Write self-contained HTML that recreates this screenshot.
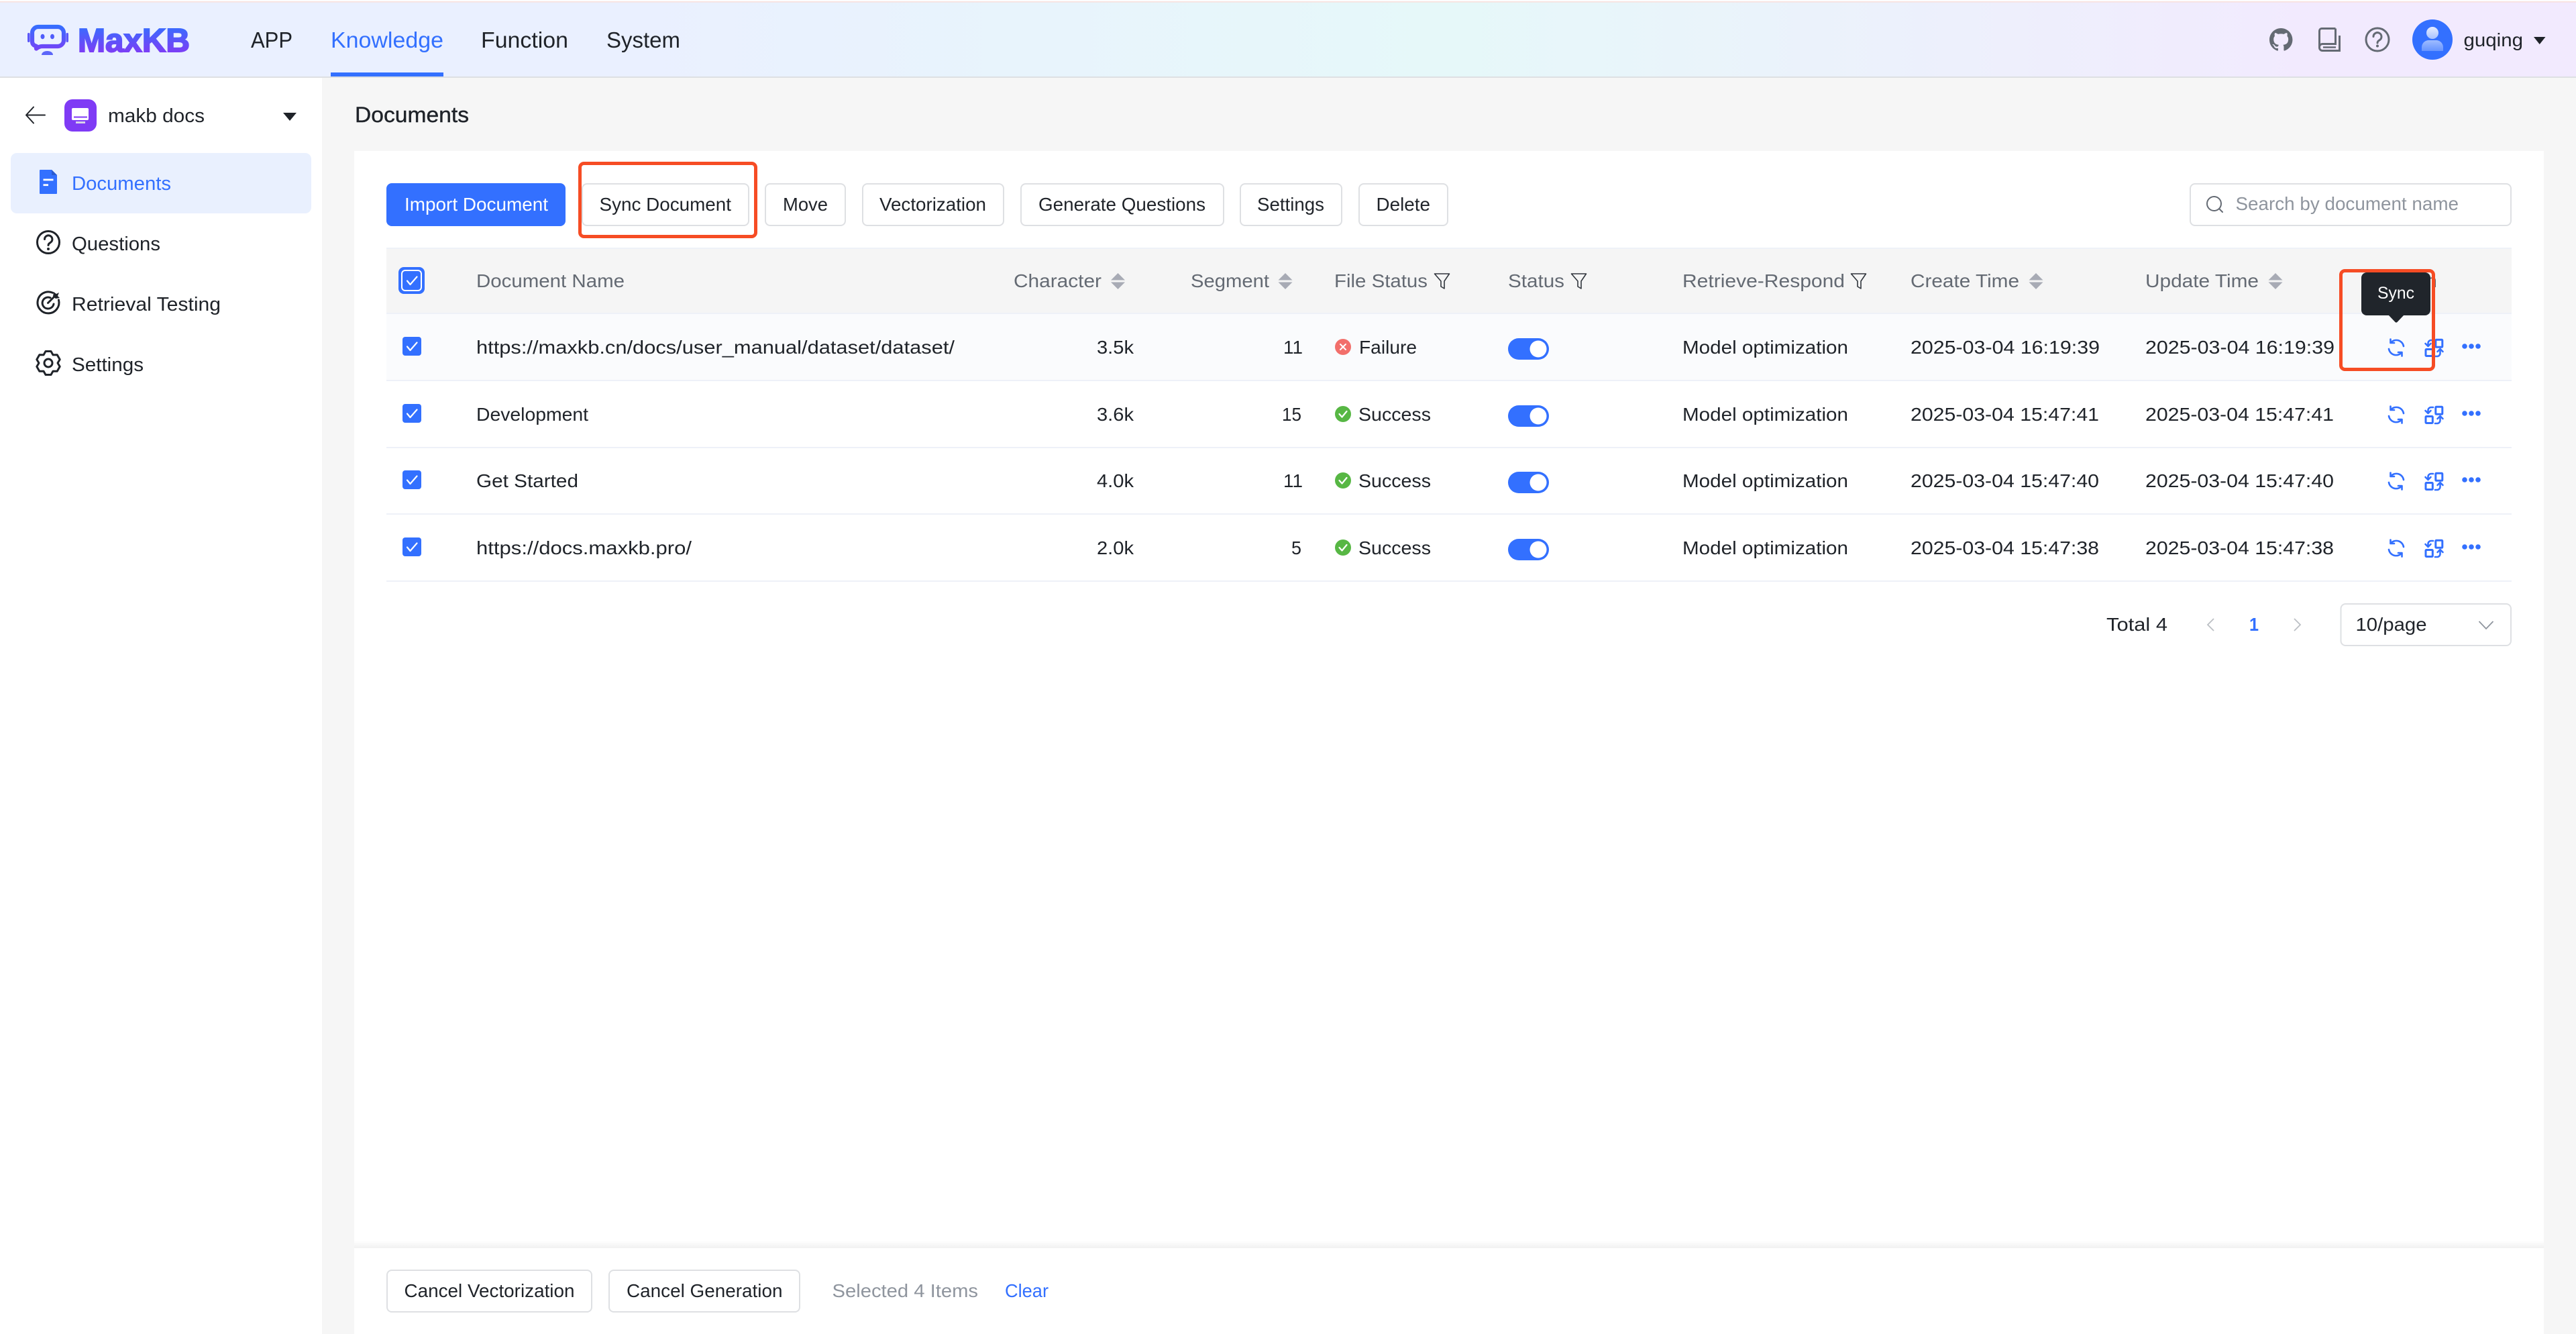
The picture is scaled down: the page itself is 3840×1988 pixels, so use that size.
<!DOCTYPE html>
<html lang="en">
<head>
<meta charset="utf-8">
<title>MaxKB - Documents</title>
<style>
html,body{margin:0;padding:0;background:#F6F6F6;width:3840px;height:1988px;overflow:hidden}
svg{display:block}
text{font-family:"Liberation Sans",sans-serif;fill:#1F2329;font-size:27.5px}
.s{fill:#646A73}
.b{fill:#3370FF}
.p{fill:#8F959E}
.w{fill:#fff}
.side{font-size:28.5px}
.nav{font-size:33px}
.btn{fill:#fff;stroke:#DEE0E3;stroke-width:2}
.line{fill:#EEF1F8}
.ic{fill:none;stroke:#3370FF;stroke-width:2.6;stroke-linecap:round;stroke-linejoin:round}
.red{fill:none;stroke:#F64C24;stroke-width:5}
.sort{fill:#A8ABB5}
.flt{fill:none;stroke:#30353C;stroke-width:1.6;stroke-linejoin:round}
.ck{fill:none;stroke:#fff;stroke-width:2.2;stroke-linecap:round;stroke-linejoin:round}
</style>
</head>
<body>
<svg xmlns="http://www.w3.org/2000/svg" width="3840" height="1988" viewBox="0 0 3840 1988">
<defs>
<linearGradient id="hd" gradientUnits="userSpaceOnUse" x1="0" y1="0" x2="3840" y2="0">
<stop offset="0.2434" stop-color="#EAF0FF"/><stop offset="0.5618" stop-color="#E6F8F9"/><stop offset="0.9018" stop-color="#F2EAFE"/>
</linearGradient>
<linearGradient id="lg" gradientUnits="userSpaceOnUse" x1="0" y1="37" x2="0" y2="80">
<stop offset="0" stop-color="#3370FF"/><stop offset="1" stop-color="#7F3BF5"/>
</linearGradient>
<linearGradient id="pn" gradientUnits="userSpaceOnUse" x1="0" y1="40" x2="0" y2="78">
<stop offset="0" stop-color="#E6EEFF"/><stop offset="1" stop-color="#5F8FFF"/>
</linearGradient>
<linearGradient id="sh" x1="0" y1="0" x2="0" y2="1">
<stop offset="0" stop-color="#F1F1F1" stop-opacity="0"/><stop offset="1" stop-color="#F1F1F1"/>
</linearGradient>
</defs>

<rect width="3840" height="1988" fill="#F6F6F6"/>

<!-- header -->
<rect width="3840" height="116" fill="url(#hd)"/>
<rect width="3840" height="2" fill="#FDFDFD"/>
<rect y="2" width="3840" height="1.5" fill="#F9DFDB"/>
<rect y="114" width="3840" height="2" fill="#DEE0E3"/>

<!-- logo -->
<path d="M57 40H86a9 9 0 0 1 9 9V60a9 9 0 0 1-9 9H63c-3 0-6 1.200-9 3.500 0-1.500 0-2.800 0-3.800-4-1-6-3.200-6-7V49a9 9 0 0 1 9-9z" fill="none" stroke="url(#lg)" stroke-width="6.200" stroke-linejoin="round"/>
<ellipse cx="63.500" cy="54.500" rx="3" ry="3.800" fill="#4F5CFB"/><ellipse cx="78" cy="54.500" rx="3" ry="3.800" fill="#4F5CFB"/>
<rect x="41" y="49" width="3.500" height="14" rx="1.700" fill="#5B57F8"/><rect x="98.500" y="49" width="3.500" height="14" rx="1.700" fill="#5B57F8"/>
<path d="M62 82c0-4 4-6 8.500-6s8.500 2 8.500 6z" fill="#5C66F9"/>
<text x="116" y="77" textLength="167" lengthAdjust="spacingAndGlyphs" style="font-size:49.500px;font-weight:700;fill:url(#lg);stroke:url(#lg);stroke-width:2">MaxKB</text>

<!-- nav -->
<text class="nav" x="374" y="71" textLength="62" lengthAdjust="spacingAndGlyphs">APP</text>
<text class="nav b" x="493" y="71" textLength="168" lengthAdjust="spacingAndGlyphs">Knowledge</text>
<text class="nav" x="717" y="71" textLength="130" lengthAdjust="spacingAndGlyphs">Function</text>
<text class="nav" x="904" y="71" textLength="110" lengthAdjust="spacingAndGlyphs">System</text>
<rect x="493" y="108" width="168" height="6" fill="#3370FF"/>

<!-- header right -->
<path transform="translate(3383 41.600) scale(1.435)" fill="#646A73" d="M12 .297c-6.630 0-12 5.373-12 12 0 5.303 3.438 9.800 8.205 11.385.600.113.820-.258.820-.577 0-.285-.010-1.040-.015-2.040-3.338.724-4.042-1.610-4.042-1.610C4.422 18.070 3.633 17.700 3.633 17.700c-1.087-.744.084-.729.084-.729 1.205.084 1.838 1.236 1.838 1.236 1.070 1.835 2.809 1.305 3.495.998.108-.776.417-1.305.760-1.605-2.665-.300-5.466-1.332-5.466-5.930 0-1.310.465-2.380 1.235-3.220-.135-.303-.540-1.523.105-3.176 0 0 1.005-.322 3.300 1.230.960-.267 1.980-.399 3-.405 1.020.006 2.040.138 3 .405 2.280-1.552 3.285-1.230 3.285-1.230.645 1.653.240 2.873.120 3.176.765.840 1.230 1.910 1.230 3.220 0 4.610-2.805 5.625-5.475 5.920.420.360.810 1.096.810 2.220 0 1.606-.015 2.896-.015 3.286 0 .315.210.690.825.570C20.565 22.092 24 17.592 24 12.297c0-6.627-5.373-12-12-12"/>
<g fill="none" stroke="#646A73" stroke-width="3">
<path d="M3481.500 42.500H3461a3.500 3.500 0 0 0-3.500 3.500V71a4.500 4.500 0 0 0 4.500 4.500H3487.500V53"/>
<path d="M3481.500 42.500V65.500H3462a4.500 4.500 0 0 0-4.500 4.500"/>
<path d="M3463 70.500H3482" stroke-width="2.500"/>
<circle cx="3544" cy="59" r="17"/>
<path d="M3538 54.500a6 6 0 1 1 9.500 5c-2.200 1.500-3.500 2.300-3.500 4.500" stroke-linecap="round"/>
</g>
<circle cx="3544" cy="68.500" r="2" fill="#646A73"/>
<circle cx="3626" cy="59" r="30" fill="#3370FF"/>
<circle cx="3626" cy="49" r="9" fill="url(#pn)"/>
<path d="M3610 76V71c0-7 5-11 11-11h10c6 0 11 4 11 11v5z" fill="url(#pn)"/>
<text x="3672.500" y="69" textLength="88.500" lengthAdjust="spacingAndGlyphs">guqing</text>
<path d="M3777 55H3794.500L3785.750 66z" fill="#1F2329"/>

<!-- sidebar -->
<rect y="116" width="480" height="1872" fill="#fff"/>
<path d="M67 171.500H39M50 159.500L39 171.500L50 183.500" fill="none" stroke="#1F2329" stroke-width="2" stroke-linecap="round" stroke-linejoin="round"/>
<rect x="96" y="148" width="48" height="48" rx="12" fill="#7F3BF5"/>
<rect x="107" y="161" width="25" height="18" rx="2" fill="#fff"/>
<rect x="110" y="173.500" width="20" height="2" fill="#7F3BF5"/>
<rect x="113" y="181" width="14" height="3" fill="#D8D4E8"/>
<text class="side" x="161" y="182" textLength="144" lengthAdjust="spacingAndGlyphs">makb docs</text>
<path d="M422 168H442L432 180z" fill="#1F2329"/>
<rect x="16" y="228" width="448" height="90" rx="9" fill="#E9F0FE"/>
<path d="M59 254a1 1 0 0 1 1-1H77L85 261V288a1 1 0 0 1-1 1H60a1 1 0 0 1-1-1z" fill="#3370FF"/>
<path d="M77 253L85 261H77z" fill="#2A5BD0"/>
<rect x="64.500" y="266.500" width="15" height="2.800" fill="#fff"/><rect x="64.500" y="274.300" width="7.500" height="2.800" fill="#fff"/>
<text class="side b" x="107" y="283" textLength="148" lengthAdjust="spacingAndGlyphs">Documents</text>

<g fill="none" stroke="#1F2329" stroke-width="3" stroke-linecap="round" stroke-linejoin="round">
<circle cx="72" cy="361" r="16.500"/>
<path d="M66.500 356.500a5.700 5.700 0 1 1 9 4.700c-2 1.400-3.500 2.200-3.500 4.300"/>
<path d="M78.500 436.300A16 16 0 1 0 87.500 447"/>
<path d="M75 443.700A8.500 8.500 0 1 0 80 453"/>
<path d="M71.500 451.500L83 440"/>
<path d="M68 523.500H76L79 528.900L85.200 528.700L89.200 535.700L86 541L89.200 546.300L85.200 553.300L79 553.100L76 558.500H68L65 553.100L58.800 553.300L54.800 546.300L58 541L54.800 535.700L58.800 528.700L65 528.900z"/>
<circle cx="72" cy="541" r="6"/>
</g>
<circle cx="72" cy="371" r="2" fill="#1F2329"/>
<path d="M79 442L80 435L84 438L88 436L86 441L89 444L83 445z" fill="#1F2329"/>
<text class="side" x="107" y="373" textLength="132" lengthAdjust="spacingAndGlyphs">Questions</text>
<text class="side" x="107" y="463" textLength="222" lengthAdjust="spacingAndGlyphs">Retrieval Testing</text>
<text class="side" x="107" y="553" textLength="107" lengthAdjust="spacingAndGlyphs">Settings</text>

<!-- title -->
<text x="529" y="182" textLength="170" lengthAdjust="spacingAndGlyphs" style="font-size:32px;stroke:#1F2329;stroke-width:.4">Documents</text>

<!-- card -->
<rect x="528" y="225" width="3264" height="1763" fill="#fff"/>

<!-- toolbar -->
<rect x="576" y="273" width="267" height="64" rx="8" fill="#3370FF"/>
<text class="w" x="603" y="314" textLength="214" lengthAdjust="spacingAndGlyphs">Import Document</text>
<rect class="btn" x="868" y="274" width="248" height="62" rx="7"/>
<text x="893.500" y="314" textLength="196.500" lengthAdjust="spacingAndGlyphs">Sync Document</text>
<rect class="btn" x="1141" y="274" width="119" height="62" rx="7"/>
<text x="1167" y="314" textLength="67" lengthAdjust="spacingAndGlyphs">Move</text>
<rect class="btn" x="1286" y="274" width="210" height="62" rx="7"/>
<text x="1311" y="314" textLength="159" lengthAdjust="spacingAndGlyphs">Vectorization</text>
<rect class="btn" x="1522" y="274" width="302" height="62" rx="7"/>
<text x="1548" y="314" textLength="249" lengthAdjust="spacingAndGlyphs">Generate Questions</text>
<rect class="btn" x="1849" y="274" width="151" height="62" rx="7"/>
<text x="1874" y="314" textLength="100" lengthAdjust="spacingAndGlyphs">Settings</text>
<rect class="btn" x="2026" y="274" width="132" height="62" rx="7"/>
<text x="2051.500" y="314" textLength="80.500" lengthAdjust="spacingAndGlyphs">Delete</text>
<rect class="red" x="864.500" y="243.500" width="262" height="109" rx="6"/>

<!-- search -->
<rect class="btn" x="3265" y="274" width="478" height="62" rx="7"/>
<circle cx="3300.500" cy="303.500" r="10.500" fill="none" stroke="#646A73" stroke-width="2"/>
<path d="M3308 311L3313 316" stroke="#646A73" stroke-width="2" stroke-linecap="round"/>
<text class="p" x="3332.500" y="313" textLength="332.500" lengthAdjust="spacingAndGlyphs">Search by document name</text>

<!-- table header -->
<rect x="576" y="369" width="3168" height="98" fill="#F5F5F5"/>
<rect class="line" x="576" y="369" width="3168" height="2"/>
<rect x="576" y="468" width="3168" height="98" fill="#FAFBFD"/>
<rect class="line" x="576" y="466" width="3168" height="2"/>
<rect class="line" x="576" y="566" width="3168" height="2"/>
<rect class="line" x="576" y="666" width="3168" height="2"/>
<rect class="line" x="576" y="765" width="3168" height="2"/>
<rect class="line" x="576" y="865" width="3168" height="2"/>

<rect x="594" y="398" width="39" height="40" rx="8" fill="#3370FF"/>
<rect x="599" y="403" width="29" height="30" rx="5" fill="#3370FF" stroke="#fff" stroke-width="2"/>
<path class="ck" d="M607 418.500L611.500 424L621.500 412.500"/>
<text class="s" x="710" y="428" textLength="221" lengthAdjust="spacingAndGlyphs">Document Name</text>
<text class="s" x="1511" y="428" textLength="131" lengthAdjust="spacingAndGlyphs">Character</text>
<path class="sort" d="M1666.500 407L1677 417.500H1656zM1666.500 431L1677 420.500H1656z"/>
<text class="s" x="1775" y="428" textLength="117" lengthAdjust="spacingAndGlyphs">Segment</text>
<path class="sort" d="M1916 407L1926.500 417.500H1905.500zM1916 431L1926.500 420.500H1905.500z"/>
<text class="s" x="1989" y="428" textLength="139" lengthAdjust="spacingAndGlyphs">File Status</text>
<path class="flt" d="M2138.500 408H2160.500L2153 419V430L2148 427V419z"/>
<text class="s" x="2248" y="428" textLength="84" lengthAdjust="spacingAndGlyphs">Status</text>
<path class="flt" d="M2342.500 408H2364.500L2357 419V430L2352 427V419z"/>
<text class="s" x="2508" y="428" textLength="242" lengthAdjust="spacingAndGlyphs">Retrieve-Respond</text>
<path class="flt" d="M2759.500 408H2781.500L2774 419V430L2769 427V419z"/>
<text class="s" x="2848" y="428" textLength="162" lengthAdjust="spacingAndGlyphs">Create Time</text>
<path class="sort" d="M3035 407L3045.500 417.500H3024.500zM3035 431L3045.500 420.500H3024.500z"/>
<text class="s" x="3198" y="428" textLength="169" lengthAdjust="spacingAndGlyphs">Update Time</text>
<path class="sort" d="M3392 407L3402.500 417.500H3381.500zM3392 431L3402.500 420.500H3381.500z"/>
<text class="s" x="3548" y="428" textLength="85" lengthAdjust="spacingAndGlyphs">Action</text>

<!-- row 1 -->
<rect x="600" y="502" width="28" height="28" rx="4" fill="#3370FF"/>
<path class="ck" d="M607 516.500L611.500 522L621.500 510.500"/>
<text x="710" y="527" textLength="713" lengthAdjust="spacingAndGlyphs">https://maxkb.cn/docs/user_manual/dataset/dataset/</text>
<text x="1635" y="527" textLength="55" lengthAdjust="spacingAndGlyphs">3.5k</text>
<text x="1913" y="527" textLength="29" lengthAdjust="spacingAndGlyphs">11</text>
<circle cx="2002" cy="517" r="12" fill="#F26F6B"/>
<path d="M1998 513L2006 521M2006 513L1998 521" stroke="#fff" stroke-width="2" stroke-linecap="round"/>
<text x="2026" y="527" textLength="86" lengthAdjust="spacingAndGlyphs">Failure</text>
<rect x="2248" y="504" width="61" height="32" rx="16" fill="#3370FF"/><circle cx="2293" cy="520" r="12.500" fill="#fff"/>
<text x="2508" y="527" textLength="247" lengthAdjust="spacingAndGlyphs">Model optimization</text>
<text x="2848" y="527" textLength="282" lengthAdjust="spacingAndGlyphs">2025-03-04 16:19:39</text>
<text x="3198" y="527" textLength="282" lengthAdjust="spacingAndGlyphs">2025-03-04 16:19:39</text>

<!-- row 2 -->
<rect x="600" y="602" width="28" height="28" rx="4" fill="#3370FF"/>
<path class="ck" d="M607 616.500L611.500 622L621.500 610.500"/>
<text x="710" y="627" textLength="167" lengthAdjust="spacingAndGlyphs">Development</text>
<text x="1635" y="627" textLength="55" lengthAdjust="spacingAndGlyphs">3.6k</text>
<text x="1911" y="627" textLength="29" lengthAdjust="spacingAndGlyphs">15</text>
<circle cx="2002" cy="617" r="12" fill="#57B744"/>
<path d="M1996.500 617L2000.500 621.500L2007.500 613" fill="none" stroke="#fff" stroke-width="2.200" stroke-linecap="round" stroke-linejoin="round"/>
<text x="2025" y="627" textLength="108" lengthAdjust="spacingAndGlyphs">Success</text>
<rect x="2248" y="604" width="61" height="32" rx="16" fill="#3370FF"/><circle cx="2293" cy="620" r="12.500" fill="#fff"/>
<text x="2508" y="627" textLength="247" lengthAdjust="spacingAndGlyphs">Model optimization</text>
<text x="2848" y="627" textLength="281" lengthAdjust="spacingAndGlyphs">2025-03-04 15:47:41</text>
<text x="3198" y="627" textLength="281" lengthAdjust="spacingAndGlyphs">2025-03-04 15:47:41</text>

<!-- row 3 -->
<rect x="600" y="701" width="28" height="28" rx="4" fill="#3370FF"/>
<path class="ck" d="M607 715.500L611.500 721L621.500 709.500"/>
<text x="710" y="726" textLength="152" lengthAdjust="spacingAndGlyphs">Get Started</text>
<text x="1635" y="726" textLength="55" lengthAdjust="spacingAndGlyphs">4.0k</text>
<text x="1913" y="726" textLength="29" lengthAdjust="spacingAndGlyphs">11</text>
<circle cx="2002" cy="716" r="12" fill="#57B744"/>
<path d="M1996.500 716L2000.500 720.500L2007.500 712" fill="none" stroke="#fff" stroke-width="2.200" stroke-linecap="round" stroke-linejoin="round"/>
<text x="2025" y="726" textLength="108" lengthAdjust="spacingAndGlyphs">Success</text>
<rect x="2248" y="703" width="61" height="32" rx="16" fill="#3370FF"/><circle cx="2293" cy="719" r="12.500" fill="#fff"/>
<text x="2508" y="726" textLength="247" lengthAdjust="spacingAndGlyphs">Model optimization</text>
<text x="2848" y="726" textLength="281" lengthAdjust="spacingAndGlyphs">2025-03-04 15:47:40</text>
<text x="3198" y="726" textLength="281" lengthAdjust="spacingAndGlyphs">2025-03-04 15:47:40</text>

<!-- row 4 -->
<rect x="600" y="801" width="28" height="28" rx="4" fill="#3370FF"/>
<path class="ck" d="M607 815.500L611.500 821L621.500 809.500"/>
<text x="710" y="826" textLength="321" lengthAdjust="spacingAndGlyphs">https://docs.maxkb.pro/</text>
<text x="1635" y="826" textLength="55" lengthAdjust="spacingAndGlyphs">2.0k</text>
<text x="1925" y="826" textLength="15" lengthAdjust="spacingAndGlyphs">5</text>
<circle cx="2002" cy="816" r="12" fill="#57B744"/>
<path d="M1996.500 816L2000.500 820.500L2007.500 812" fill="none" stroke="#fff" stroke-width="2.200" stroke-linecap="round" stroke-linejoin="round"/>
<text x="2025" y="826" textLength="108" lengthAdjust="spacingAndGlyphs">Success</text>
<rect x="2248" y="803" width="61" height="32" rx="16" fill="#3370FF"/><circle cx="2293" cy="819" r="12.500" fill="#fff"/>
<text x="2508" y="826" textLength="247" lengthAdjust="spacingAndGlyphs">Model optimization</text>
<text x="2848" y="826" textLength="281" lengthAdjust="spacingAndGlyphs">2025-03-04 15:47:38</text>
<text x="3198" y="826" textLength="281" lengthAdjust="spacingAndGlyphs">2025-03-04 15:47:38</text>

<!-- row actions -->
<g id="acts">
<g class="ic">
<path d="M3583 516A11 11 0 0 0 3564 510.500"/><path d="M3563.500 505.500V511H3569"/>
<path d="M3561 520A11 11 0 0 0 3580 525.500"/><path d="M3580.500 530.500V525H3575"/>
<rect x="3630.800" y="506.300" width="10" height="11" rx="1" stroke-width="3"/>
<rect x="3616" y="520.500" width="10.300" height="10" rx="1" stroke-width="3"/>
<path d="M3627 507H3624a4.500 4.500 0 0 0-4.500 4.500V515"/><path d="M3615.500 512L3619.500 516L3623.500 512"/>
<path d="M3630 531H3633a4.500 4.500 0 0 0 4.500-4.500V522"/><path d="M3633.500 524L3637.500 520L3641.500 524"/>
</g>
<circle cx="3674" cy="516" r="3.800" fill="#3370FF"/><circle cx="3684" cy="516" r="3.800" fill="#3370FF"/><circle cx="3694" cy="516" r="3.800" fill="#3370FF"/>
</g>
<use href="#acts" y="100"/>
<use href="#acts" y="199"/>
<use href="#acts" y="299"/>

<!-- annotation + tooltip -->
<rect class="red" x="3489.500" y="403.500" width="138" height="147" rx="6"/>
<rect x="3520" y="406" width="103" height="64" rx="8" fill="#20252B"/>
<path d="M3560 469H3584L3573.500 480a2 2 0 0 1-3 0z" fill="#20252B"/>
<text class="w" x="3544" y="445" textLength="55" lengthAdjust="spacingAndGlyphs" style="font-size:25px">Sync</text>

<!-- pagination -->
<text x="3140" y="940" textLength="91" lengthAdjust="spacingAndGlyphs">Total 4</text>
<path d="M3300 922L3291 931L3300 940" fill="none" stroke="#BBBFC4" stroke-width="1.800"/>
<text class="b" x="3353" y="940" textLength="14" lengthAdjust="spacingAndGlyphs" style="font-weight:700">1</text>
<path d="M3420 922L3429 931L3420 940" fill="none" stroke="#BBBFC4" stroke-width="1.800"/>
<rect class="btn" x="3489.500" y="900" width="253.500" height="62" rx="7"/>
<text x="3511.500" y="940" textLength="106" lengthAdjust="spacingAndGlyphs">10/page</text>
<path d="M3695.500 926L3706 937L3716.500 926" fill="none" stroke="#8F959E" stroke-width="1.800"/>

<!-- bottom bar -->
<rect x="528" y="1849" width="3264" height="11" fill="url(#sh)"/>
<rect x="528" y="1860" width="3264" height="128" fill="#fff"/>
<rect class="btn" x="577" y="1893" width="305" height="62" rx="7"/>
<text x="602.500" y="1933" textLength="254" lengthAdjust="spacingAndGlyphs">Cancel Vectorization</text>
<rect class="btn" x="908" y="1893" width="284" height="62" rx="7"/>
<text x="934" y="1933" textLength="232.500" lengthAdjust="spacingAndGlyphs">Cancel Generation</text>
<text class="p" x="1240.500" y="1933" textLength="217.500" lengthAdjust="spacingAndGlyphs">Selected 4 Items</text>
<text class="b" x="1498" y="1933" textLength="65" lengthAdjust="spacingAndGlyphs">Clear</text>
</svg>
</body>
</html>
